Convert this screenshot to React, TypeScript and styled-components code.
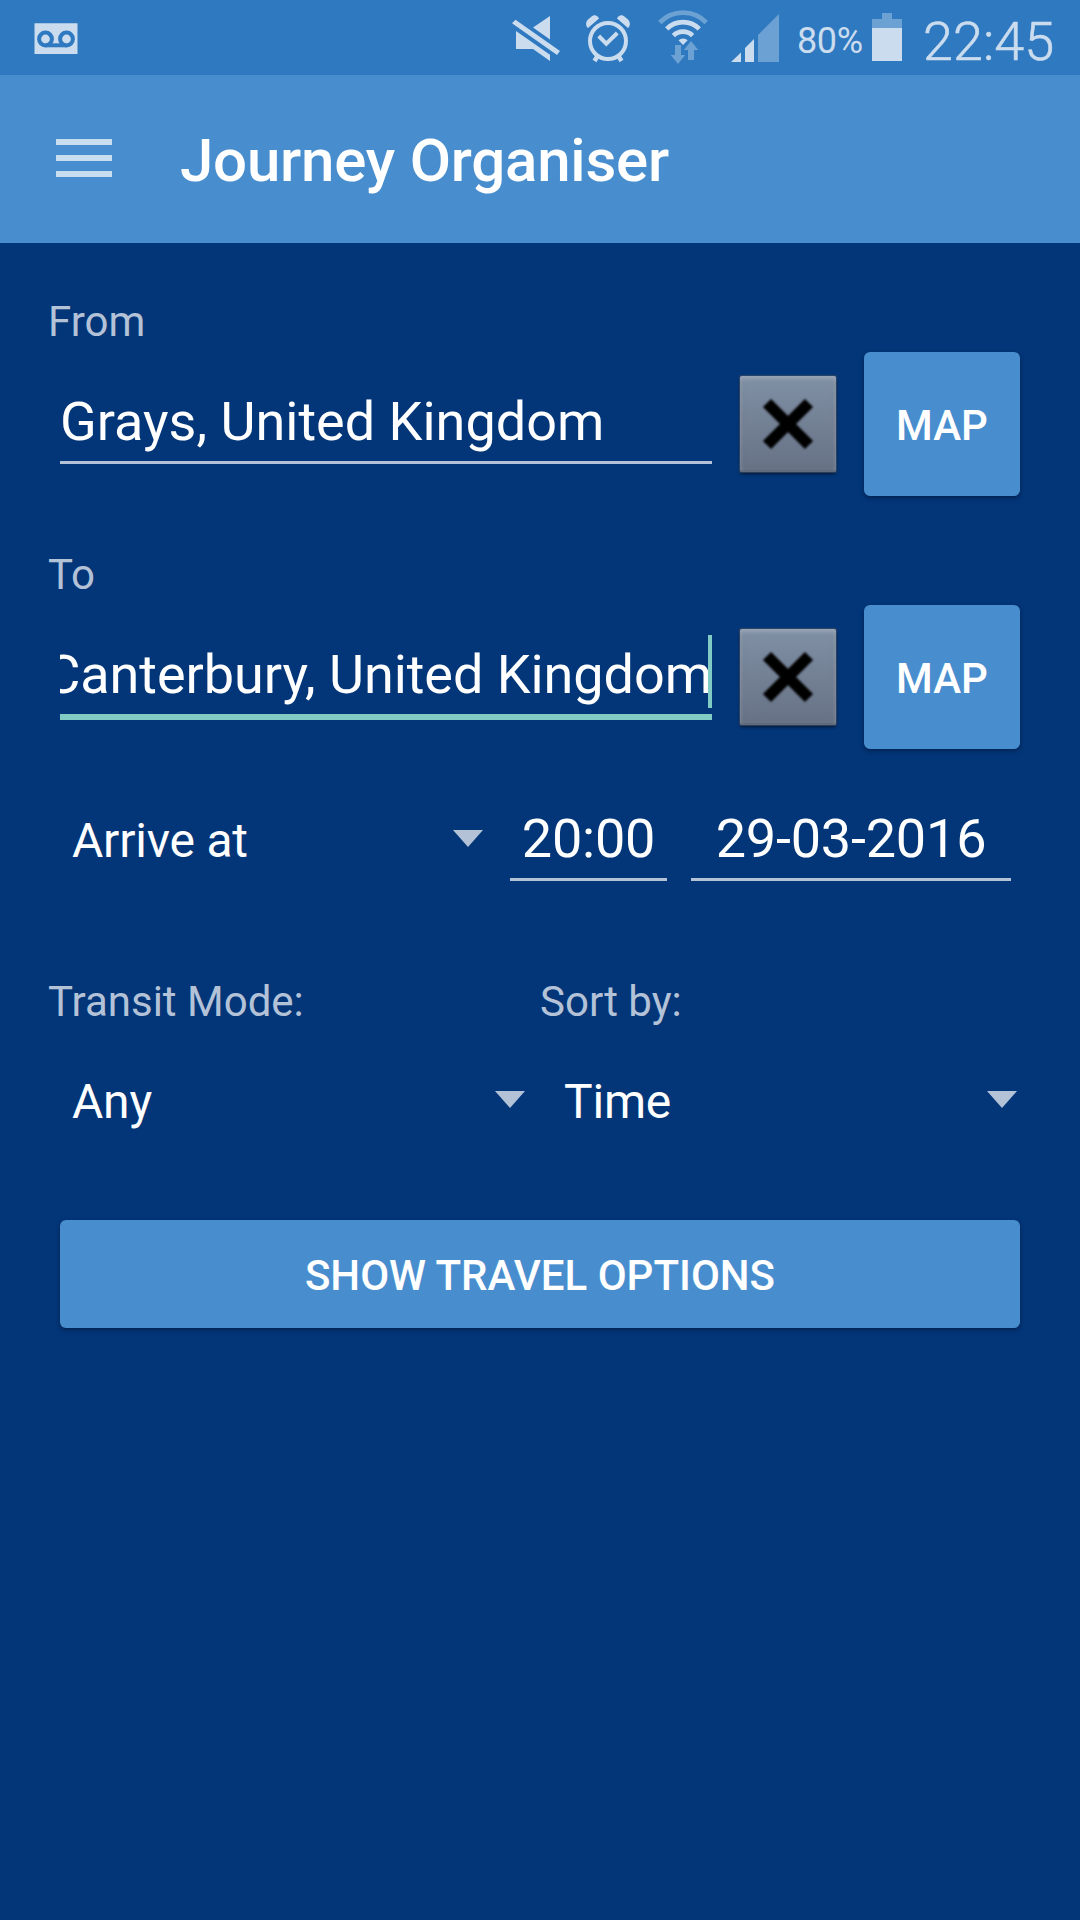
import React from "react";
import styled, { createGlobalStyle } from "styled-components";

const ink = "#cadcee";
const dim = "#6ca1d3";
const muted = "#b3c2d7";
const accent = "#80cbc4";
const primary = "#488ecf";
const primaryDark = "#2f79c0";
const surface = "#033678";

const GlobalStyle = createGlobalStyle`
  *, *::before, *::after { box-sizing: border-box; }
  body {
    margin: 0;
    background: ${surface};
    font-family: Roboto, "Noto Sans", sans-serif;
  }
  button { font-family: inherit; border: 0; padding: 0; }
`;

const Screen = styled.div`
  display: flex;
  flex-direction: column;
  width: 1080px;
  height: 1920px;
  background: ${surface};
  color: #fff;
  overflow: hidden;
`;

const StatusBar = styled.header`
  display: flex;
  justify-content: space-between;
  height: 75px;
  padding: 0 26px 0 34px;
  background: ${primaryDark};
  color: ${ink};
`;

const StatusGroup = styled.div`
  display: flex;
`;

const StatusIcon = styled.svg<{ $gap?: number }>`
  display: block;
  height: 75px;
  margin-right: ${(p) => p.$gap ?? 0}px;
`;

const BatteryLevel = styled.span`
  width: 75px;
  font-size: 36px;
  line-height: 82px;
  white-space: nowrap;
  letter-spacing: -0.4px;
`;

const Clock = styled.span`
  width: 131px;
  font-size: 54px;
  font-weight: 300;
  -webkit-text-stroke: 0.6px ${ink};
  line-height: 83px;
  white-space: nowrap;
`;

const AppBar = styled.div`
  display: flex;
  align-items: center;
  gap: 68px;
  height: 168px;
  padding: 0 56px;
  background: ${primary};
`;

const MenuButton = styled.button`
  display: flex;
  flex-direction: column;
  gap: 10px;
  width: 56px;
  margin-top: -2px;
  background: none;
`;

const MenuLine = styled.span`
  height: 6px;
  background: #c8ddf0;
`;

const Title = styled.h1`
  margin: 4px 0 0;
  font-size: 60px;
  font-weight: 500;
  line-height: 70px;
  letter-spacing: -0.22px;
`;

const Form = styled.main`
  display: flex;
  flex-direction: column;
  padding: 54px 48px 0;
`;

const Label = styled.label`
  flex: 1;
  font-size: 42px;
  line-height: 50px;
  color: ${muted};
`;

const Place = styled.section`
  display: flex;
  flex-direction: column;
  gap: 5px;
  margin-bottom: 54px;
`;

const PlaceRow = styled.div`
  display: flex;
  align-items: center;
  height: 144px;
  padding: 0 12px;
`;

const Field = styled.div<{ $focused?: boolean }>`
  position: relative;
  display: flex;
  flex-direction: column;
  width: 652px;
  height: 144px;
  padding-top: 38px;
  gap: 7px;

  &::after {
    content: "";
    height: ${(p) => (p.$focused ? 6 : 3)}px;
    background: ${(p) => (p.$focused ? accent : muted)};
  }
`;

const FieldText = styled.div<{ $focused?: boolean }>`
  display: flex;
  justify-content: ${(p) => (p.$focused ? "flex-end" : "flex-start")};
  overflow: hidden;
  font-size: 54px;
  line-height: 64px;
  letter-spacing: ${(p) => (p.$focused ? "-0.06px" : "0")};
  white-space: nowrap;
`;

const Caret = styled.span`
  position: absolute;
  right: 0;
  top: 30px;
  width: 4px;
  height: 73px;
  background: ${accent};
`;

const ClearButton = styled.button`
  width: 96px;
  height: 96px;
  margin: 0 28px;
  border-radius: 2px;
  background: linear-gradient(#8090a5, #667184);
  box-shadow: inset 0 4px 4px -1px rgba(170, 180, 195, 0.55),
    inset 0 0 5px rgba(150, 160, 175, 0.45), inset 0 -2px 1px rgba(70, 80, 96, 0.5),
    0 0 1px 0.5px rgba(60, 75, 100, 0.8), 0 2px 3px rgba(0, 10, 25, 0.75);
`;

const CrossMark = styled.svg`
  display: block;
  width: 96px;
  height: 96px;
  filter: blur(1px);
`;

const RaisedButton = styled.button<{ $height: number }>`
  flex: 1;
  height: ${(p) => p.$height}px;
  padding-top: 3px;
  border-radius: 6px;
  background: ${primary};
  box-shadow: 0 2px 4px rgba(0, 15, 45, 0.5);
  color: #fff;
  font-size: 42px;
  font-weight: 500;
  line-height: 50px;
`;

const ScheduleRow = styled.div`
  display: flex;
  margin-top: 4px;
  padding-right: 21px;
`;

const Spinner = styled.div<{ $width: number }>`
  display: flex;
  align-items: flex-start;
  justify-content: space-between;
  width: ${(p) => p.$width}px;
  height: 56px;
  padding: 0 15px 0 24px;
  font-size: 48px;
  line-height: 56px;
  letter-spacing: -0.2px;
`;

const SpinnerArrow = styled.svg`
  width: 30px;
  height: 17px;
  margin-top: 17px;
`;

const ScheduleSpinner = styled.div`
  width: 462px;
  padding-top: 6px;
`;

const Picker = styled.div<{ $width: number }>`
  display: flex;
  flex-direction: column;
  gap: 7px;
  width: ${(p) => p.$width}px;
  margin-right: ${(p) => (p.$width < 200 ? 24 : 0)}px;
  font-size: 54px;
  line-height: 64px;
  letter-spacing: -0.2px;
  text-align: center;

  &::after {
    content: "";
    height: 3px;
    background: ${muted};
  }
`;

const LabelRow = styled.div`
  display: flex;
  margin-top: 96px;
`;

const SpinnerRow = styled.div`
  display: flex;
  margin-top: 47px;
`;

const SubmitRow = styled.div`
  display: flex;
  margin-top: 90px;
  padding: 0 12px;
`;

function Dropdown({ value, width = 492 }: { value: string; width?: number }) {
  return (
    <Spinner $width={width}>
      {value}
      <SpinnerArrow viewBox="0 0 30 17">
        <path d="M0 0h30L15 17z" fill={muted} />
      </SpinnerArrow>
    </Spinner>
  );
}

function PlaceInput({ label, value, focused }: { label: string; value: string; focused?: boolean }) {
  return (
    <Place>
      <Label>{label}</Label>
      <PlaceRow>
        <Field $focused={focused}>
          <FieldText $focused={focused}>
            <span>{value}</span>
          </FieldText>
          {focused && <Caret />}
        </Field>
        <ClearButton aria-label="Clear">
          <CrossMark viewBox="0 0 96 96">
            <path d="M27 27L69 69M69 27L27 69" stroke="#000" strokeWidth="11.5" />
          </CrossMark>
        </ClearButton>
        <RaisedButton $height={144}>MAP</RaisedButton>
      </PlaceRow>
    </Place>
  );
}

export default function App() {
  return (
    <Screen>
      <GlobalStyle />
      <StatusBar>
        <StatusIcon width="44" viewBox="34 0 44 75">
          <path d="M34.500 23.300h43v30.700h-43z" fill={ink} />
          <g fill="none" stroke={primaryDark} strokeWidth="4">
            <circle cx="45.5" cy="39" r="6.4" />
            <circle cx="66.5" cy="39" r="6.4" />
            <path d="M45.5 45.3h21" />
          </g>
        </StatusIcon>
        <StatusGroup>
          <StatusIcon width="50" $gap={24} viewBox="21 0 50 75">
            <g fill={ink}>
              <path d="M22 23.3L25.5 19.8L70 51L67 55z" />
              <path d="M26 31L60 54.7V61L43 49H26z" />
              <path d="M43 27.6L60 16V39.5z" />
            </g>
          </StatusIcon>
          <StatusIcon width="46" $gap={27} viewBox="95 0 46 75">
            <g fill="none" stroke={ink} strokeWidth="4">
              <circle cx="118" cy="41" r="18" />
              <path d="M108.7 36L116.3 43.7L127.3 33" />
              <path d="M107.5 56L104.5 61M128.5 56L131.5 61" strokeWidth="4.5" />
            </g>
            <path
              d="M98 28C95.5 26 95.5 22 98 19.5L101 17C103.5 14.5 107 14.5 109 18.500ZM138 28C140.5 26 140.5 22 138 19.5L135 17C132.5 14.5 129 14.5 127 18.500Z"
              fill={ink}
            />
          </StatusIcon>
          <StatusIcon width="50" $gap={23} viewBox="168 0 50 75">
            <g fill="none" stroke={ink} strokeWidth="4.6">
              <path d="M169.8 22.5A32 32 0 0 1 216.2 22.5" stroke={dim} strokeWidth="4.8" />
              <path d="M176.7 28.9A23 23 0 0 1 209.3 28.9" />
              <path d="M183.4 35.6A13.6 13.6 0 0 1 202.6 35.6" />
            </g>
            <path d="M188.5 40.3A6.5 6.5 0 0 1 197.7 40.3L193 45z" fill={ink} />
            <path
              d="M185 45h6v10h4.3L188 64l-7.3-9H185zM201 41l7.3 9H204v10h-6V50h-4.3z"
              fill={dim}
            />
          </StatusIcon>
          <StatusIcon width="48" $gap={18} viewBox="241 0 48 75">
            <path d="M241 62L251 52.5V62zM255 62V48L264 39V62z" fill={ink} />
            <path d="M268 62V35L289 14V62z" fill={dim} />
          </StatusIcon>
          <BatteryLevel>80%</BatteryLevel>
          <StatusIcon width="30" $gap={21} viewBox="92 0 30 75">
            <path d="M92 28V19h10V13h10v6h10v9z" fill={dim} />
            <path d="M92 28h30v33H92z" fill={ink} />
          </StatusIcon>
          <Clock>22:45</Clock>
        </StatusGroup>
      </StatusBar>
      <AppBar>
        <MenuButton aria-label="Menu">
          <MenuLine />
          <MenuLine />
          <MenuLine />
        </MenuButton>
        <Title>Journey Organiser</Title>
      </AppBar>
      <Form>
        <PlaceInput label="From" value="Grays, United Kingdom" />
        <PlaceInput label="To" value="Canterbury, United Kingdom" focused />
        <ScheduleRow>
          <ScheduleSpinner>
            <Dropdown value="Arrive at" width={450} />
          </ScheduleSpinner>
          <Picker $width={157}>20:00</Picker>
          <Picker $width={320}>29-03-2016</Picker>
        </ScheduleRow>
        <LabelRow>
          <Label>Transit Mode:</Label>
          <Label>Sort by:</Label>
        </LabelRow>
        <SpinnerRow>
          <Dropdown value="Any" />
          <Dropdown value="Time" />
        </SpinnerRow>
        <SubmitRow>
          <RaisedButton $height={108}>SHOW TRAVEL OPTIONS</RaisedButton>
        </SubmitRow>
      </Form>
    </Screen>
  );
}
